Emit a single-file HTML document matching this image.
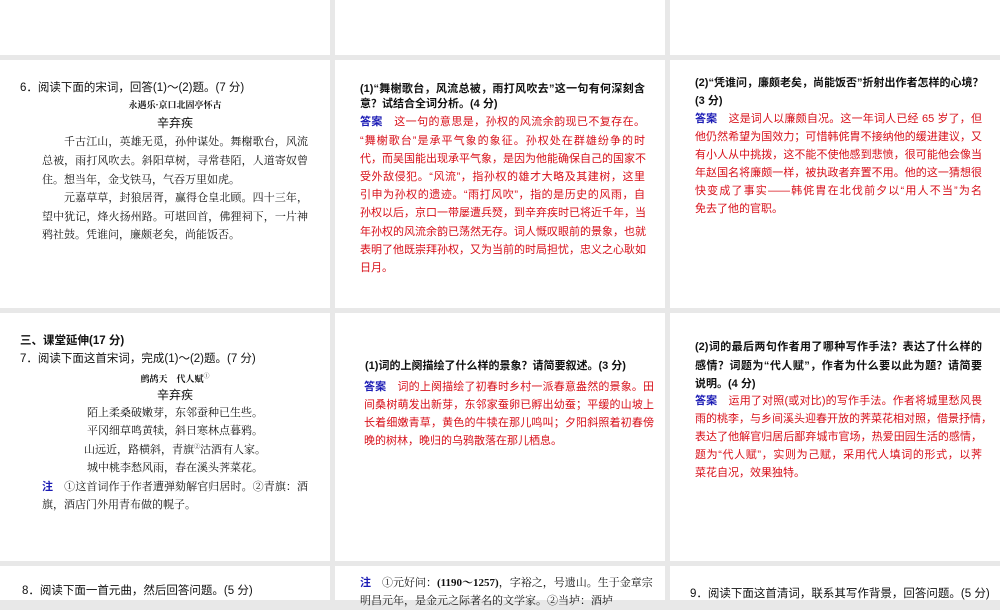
<!DOCTYPE html>
<html><head><meta charset="utf-8">
<style>
body{margin:0;width:1000px;height:600px;background:#e8e8e8;position:relative;overflow:hidden;font-family:"Liberation Serif","Noto Serif CJK SC",serif;}
.p{position:absolute;background:#fff;}
.l{position:absolute;white-space:nowrap;font-size:11px;line-height:18px;color:#111;}
.j{text-align:justify;text-align-last:justify;}
.r{color:#d8101a;}
.b{color:#1a1ab4;font-weight:bold;font-family:"Liberation Sans","Noto Sans CJK SC",sans-serif;}
.k{font-family:"Liberation Sans","Noto Sans CJK SC",sans-serif;}
.q{font-weight:bold;}
.po{font-size:11px;}
.t{font-size:9px;font-weight:bold;}
</style></head><body>
<div class="p" style="left:0;top:0;width:330px;height:55px"></div>
<div class="p" style="left:335px;top:0;width:330px;height:55px"></div>
<div class="p" style="left:670px;top:0;width:330px;height:55px"></div>
<div class="p" style="left:0;top:60px;width:330px;height:248px"></div>
<div class="p" style="left:335px;top:60px;width:330px;height:248px"></div>
<div class="p" style="left:670px;top:60px;width:330px;height:248px"></div>
<div class="p" style="left:0;top:313px;width:330px;height:248px"></div>
<div class="p" style="left:335px;top:313px;width:330px;height:248px"></div>
<div class="p" style="left:670px;top:313px;width:330px;height:248px"></div>
<div class="p" style="left:0;top:566px;width:330px;height:34px"></div>
<div class="p" style="left:335px;top:566px;width:330px;height:34px"></div>
<div class="p" style="left:670px;top:566px;width:330px;height:34px"></div>

<!-- left row 2 -->
<div class="l k" style="left:20px;top:79px;font-size:11.5px">6．阅读下面的宋词，回答(1)～(2)题。(7 分)</div>
<div class="l t" style="left:0;width:350px;text-align:center;top:96px">永遇乐·京口北固亭怀古</div>
<div class="l k" style="left:0;width:350px;text-align:center;top:114px;font-size:12px">辛弃疾</div>
<div class="l po j" style="left:64px;width:244px;top:133px">千古江山，英雄无觅，孙仲谋处。舞榭歌台，风流</div>
<div class="l po j" style="left:42px;width:266px;top:152px">总被，雨打风吹去。斜阳草树，寻常巷陌，人道寄奴曾</div>
<div class="l po" style="left:42px;top:171px">住。想当年，金戈铁马，气吞万里如虎。</div>
<div class="l po j" style="left:64px;width:244px;top:189px">元嘉草草，封狼居胥，赢得仓皇北顾。四十三年，</div>
<div class="l po j" style="left:42px;width:266px;top:208px">望中犹记，烽火扬州路。可堪回首，佛狸祠下，一片神</div>
<div class="l po" style="left:42px;top:226px">鸦社鼓。凭谁问，廉颇老矣，尚能饭否。</div>

<!-- middle row 2 -->
<div class="l k j q" style="left:360px;width:285px;top:80px">(1)“舞榭歌台，风流总被，雨打风吹去”这一句有何深刻含</div>
<div class="l k q" style="left:360px;top:95px">意？试结合全词分析。(4 分)</div>
<div class="l k j" style="left:360px;width:285px;top:113px"><span class="b">答案</span>　<span class="r">这一句的意思是，孙权的风流余韵现已不复存在。</span></div>
<div class="l k r j" style="left:360px;width:285px;top:132px">“舞榭歌台”是承平气象的象征。孙权处在群雄纷争的时</div>
<div class="l k r j" style="left:360px;width:285px;top:150px">代，而吴国能出现承平气象，是因为他能确保自己的国家不</div>
<div class="l k r j" style="left:360px;width:285px;top:168px">受外敌侵犯。“风流”，指孙权的雄才大略及其建树，这里</div>
<div class="l k r j" style="left:360px;width:285px;top:186px">引申为孙权的遗迹。“雨打风吹”，指的是历史的风雨，自</div>
<div class="l k r j" style="left:360px;width:285px;top:204px">孙权以后，京口一带屡遭兵燹，到辛弃疾时已将近千年，当</div>
<div class="l k r j" style="left:360px;width:285px;top:223px">年孙权的风流余韵已荡然无存。词人慨叹眼前的景象，也就</div>
<div class="l k r j" style="left:360px;width:285px;top:241px">表明了他既崇拜孙权，又为当前的时局担忧，忠义之心耿如</div>
<div class="l k r" style="left:360px;top:259px">日月。</div>

<!-- right row 2 -->
<div class="l k j q" style="left:695px;width:287px;top:74px">(2)“凭谁问，廉颇老矣，尚能饭否”折射出作者怎样的心境？</div>
<div class="l k q" style="left:695px;top:92px">(3 分)</div>
<div class="l k j" style="left:695px;width:287px;top:110px"><span class="b">答案</span>　<span class="r">这是词人以廉颇自况。这一年词人已经 65 岁了，但</span></div>
<div class="l k r j" style="left:695px;width:287px;top:128px">他仍然希望为国效力；可惜韩侂胄不接纳他的缓进建议，又</div>
<div class="l k r j" style="left:695px;width:287px;top:146px">有小人从中挑拨，这不能不使他感到悲愤，很可能他会像当</div>
<div class="l k r j" style="left:695px;width:287px;top:164px">年赵国名将廉颇一样，被执政者弃置不用。他的这一猜想很</div>
<div class="l k r j" style="left:695px;width:287px;top:182px">快变成了事实——韩侂胄在北伐前夕以“用人不当”为名</div>
<div class="l k r" style="left:695px;top:200px">免去了他的官职。</div>

<!-- left row 3 -->
<div class="l k" style="left:20px;top:332px;font-weight:bold;font-size:11.5px">三、课堂延伸(17 分)</div>
<div class="l k" style="left:20px;top:350px;font-size:11.5px">7．阅读下面这首宋词，完成(1)～(2)题。(7 分)</div>
<div class="l t" style="left:0;width:350px;text-align:center;top:368px">鹧鸪天　代人赋<sup style="font-size:6px;font-weight:normal">①</sup></div>
<div class="l k" style="left:0;width:350px;text-align:center;top:386px;font-size:12px">辛弃疾</div>
<div class="l po" style="left:0;width:350px;text-align:center;top:404px">陌上柔桑破嫩芽，东邻蚕种已生些。</div>
<div class="l po" style="left:0;width:350px;text-align:center;top:422px">平冈细草鸣黄犊，斜日寒林点暮鸦。</div>
<div class="l po" style="left:0;width:350px;text-align:center;top:441px">山远近，路横斜，青旗<sup style="font-size:6px;line-height:0">②</sup>沽酒有人家。</div>
<div class="l po" style="left:0;width:350px;text-align:center;top:459px">城中桃李愁风雨，春在溪头荠菜花。</div>
<div class="l po j" style="left:42px;width:266px;top:478px"><span class="b">注</span>　①这首词作于作者遭弹劾解官归居时。②青旗：酒</div>
<div class="l po" style="left:42px;top:496px">旗，酒店门外用青布做的幌子。</div>

<!-- middle row 3 -->
<div class="l k q" style="left:365px;top:357px">(1)词的上阕描绘了什么样的景象？请简要叙述。(3 分)</div>
<div class="l k j" style="left:364px;width:290px;top:378px"><span class="b">答案</span>　<span class="r">词的上阕描绘了初春时乡村一派春意盎然的景象。田</span></div>
<div class="l k r j" style="left:364px;width:290px;top:396px">间桑树萌发出新芽，东邻家蚕卵已孵出幼蚕；平缓的山坡上</div>
<div class="l k r j" style="left:364px;width:290px;top:414px">长着细嫩青草，黄色的牛犊在那儿鸣叫；夕阳斜照着初春傍</div>
<div class="l k r" style="left:364px;top:432px">晚的树林，晚归的乌鸦散落在那儿栖息。</div>

<!-- right row 3 -->
<div class="l k j q" style="left:695px;width:287px;top:338px">(2)词的最后两句作者用了哪种写作手法？表达了什么样的</div>
<div class="l k j q" style="left:695px;width:287px;top:357px">感情？词题为“代人赋”，作者为什么要以此为题？请简要</div>
<div class="l k q" style="left:695px;top:375px">说明。(4 分)</div>
<div class="l k j" style="left:695px;width:287px;top:392px"><span class="b">答案</span>　<span class="r">运用了对照(或对比)的写作手法。作者将城里愁风畏</span></div>
<div class="l k r j" style="left:695px;width:287px;top:410px">雨的桃李，与乡间溪头迎春开放的荠菜花相对照，借景抒情，</div>
<div class="l k r j" style="left:695px;width:287px;top:428px">表达了他解官归居后鄙弃城市官场，热爱田园生活的感情，</div>
<div class="l k r j" style="left:695px;width:287px;top:446px">题为“代人赋”，实则为己赋，采用代人填词的形式，以荠</div>
<div class="l k r" style="left:695px;top:464px">菜花自况，效果独特。</div>

<!-- bottom row -->
<div class="l k" style="left:22px;top:582px;font-size:11.5px">8．阅读下面一首元曲，然后回答问题。(5 分)</div>
<div class="l po j" style="left:360px;width:288px;top:574px"><span class="b">注</span>　①元好问：<b>(1190～1257)</b>，字裕之，号遗山。生于金章宗</div>
<div class="l po" style="left:360px;top:592px">明昌元年，是金元之际著名的文学家。②当垆：酒垆</div>
<div class="l k" style="left:690px;top:585px;font-size:11.5px">9．阅读下面这首清词，联系其写作背景，回答问题。(5 分)</div>
</body></html>
